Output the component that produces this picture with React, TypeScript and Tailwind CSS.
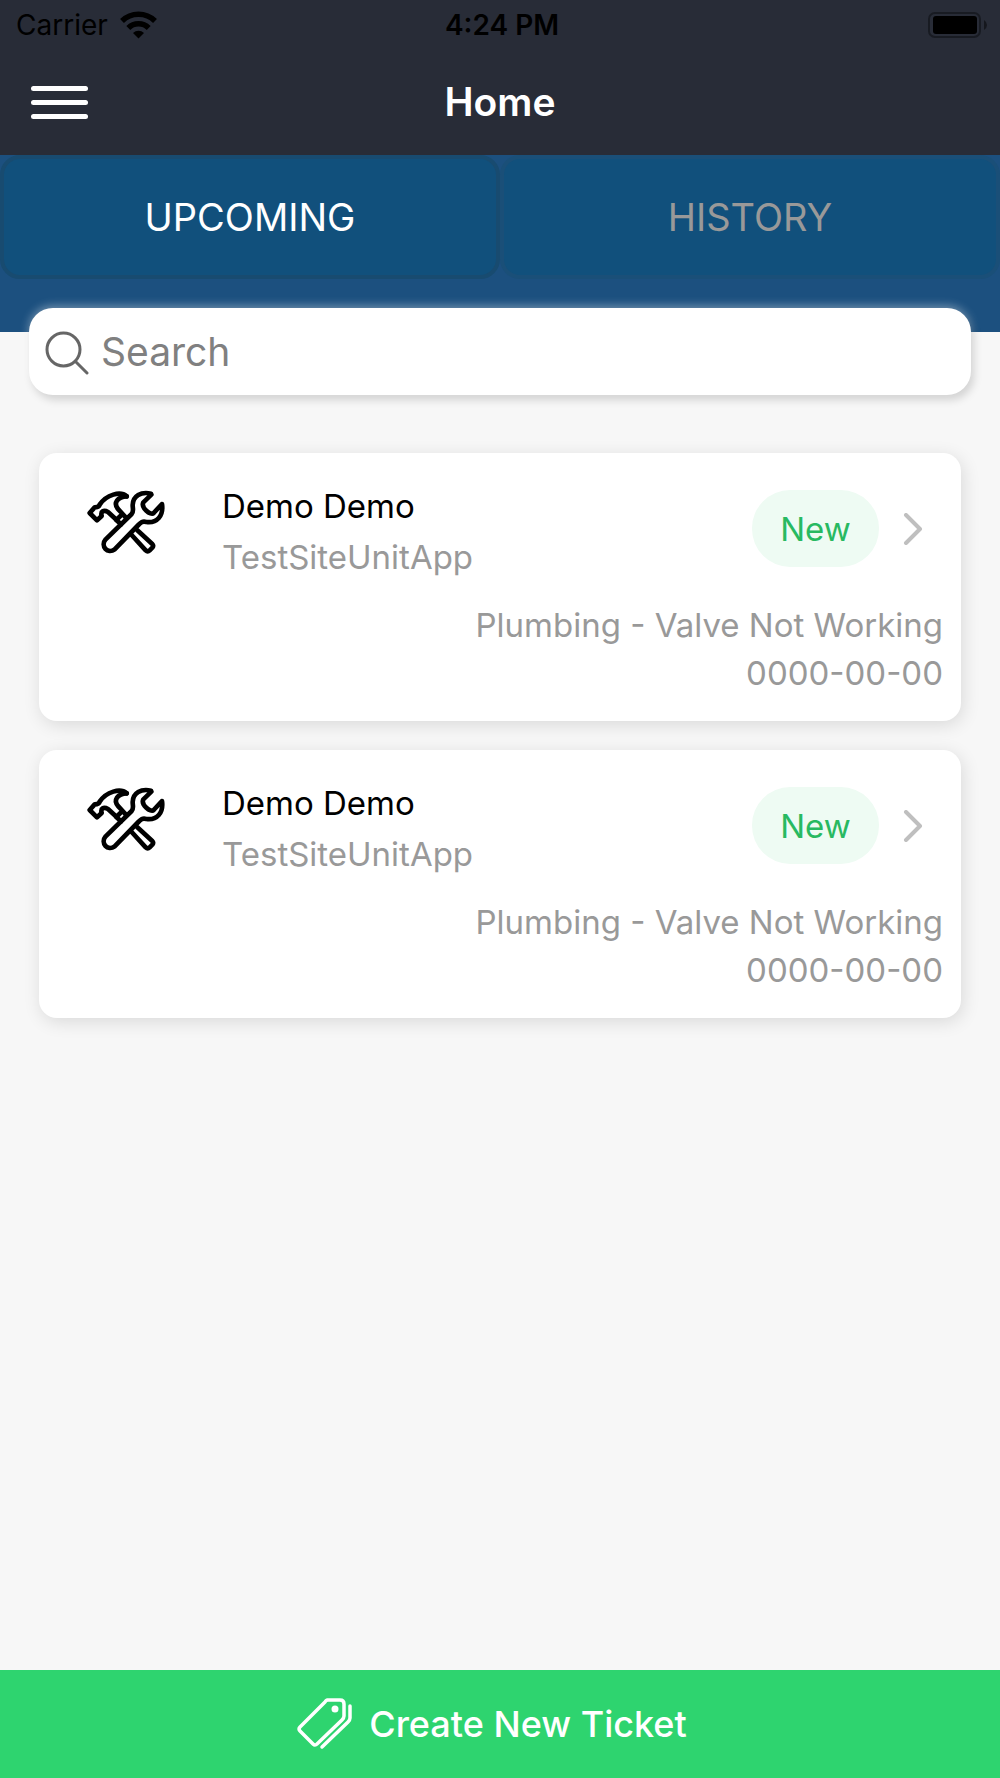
import React, { useState } from "react";

interface ticketType {
  id: number;
  name: string;
  site: string;
  status: string;
  issue: string;
  date: string;
}

const tickets: ticketType[] = [
  {
    id: 1,
    name: "Demo Demo",
    site: "TestSiteUnitApp",
    status: "New",
    issue: "Plumbing - Valve Not Working",
    date: "0000-00-00",
  },
  {
    id: 2,
    name: "Demo Demo",
    site: "TestSiteUnitApp",
    status: "New",
    issue: "Plumbing - Valve Not Working",
    date: "0000-00-00",
  },
];

const WifiIcon = () => (
  <svg className="h-7 w-[37px]" viewBox="0 0 37 28" aria-hidden="true">
    <g fill="none" stroke="#000" strokeWidth="5.500">
      <path d="M2 10A23.500 23.500 0 0 1 35 10" />
      <path d="M8.300 17A14.300 14.300 0 0 1 28.700 17" />
    </g>
    <path d="M18.500 27.500L13 22A8 8 0 0 1 24 22Z" />
  </svg>
);

const BatteryIcon = () => (
  <svg className="h-[26px] w-[60px]" viewBox="0 0 60 26" aria-hidden="true">
    <rect x="1" y="1" width="51" height="24" rx="6" fill="none" stroke="#181b22" strokeWidth="2" />
    <rect x="5" y="4" width="44" height="18" rx="3" />
    <path d="M56 8Q59 10 59 13T56 18Z" fill="#15171d" />
  </svg>
);

const SearchIcon = () => (
  <svg
    className="h-11 w-11 shrink-0"
    viewBox="0 0 44 44"
    fill="none"
    stroke="#666"
    strokeWidth="3"
    strokeLinecap="round"
    aria-hidden="true"
  >
    <circle cx="18.500" cy="18.500" r="16.500" />
    <path d="M30.500 30.500L42 42" />
  </svg>
);

const ToolsIcon = () => (
  <svg
    className="h-[65px] w-[78px]"
    viewBox="50 60 234 195"
    fill="none"
    stroke="#000"
    strokeWidth="14"
    strokeLinecap="round"
    strokeLinejoin="round"
    aria-hidden="true"
  >
    <path d="M169 79C150 62 108 74 88 104C86 112 78 112 73 112L58 129L80 151L94 138C90 124 100 119 113 126L139 150" />
    <path d="M169 79C142 80 127 99 144 118L157 132L166 142M152 136L138 150L152 163" />
    <path d="M184 195L226 241Q232 247 238 241L246 233Q251 227 245 221L201 181" />
    <path d="M242 71C212 64 188 78 187 105C187 118 191 124 184 132L106 208C89 228 112 254 133 238L204 165C212 157 216 153 228 156C260 160 280 138 275 102L250 129C241 138 211 113 219 97L243 74" />
  </svg>
);

const TagsIcon = () => (
  <svg
    className="h-[52px] w-14"
    viewBox="0 0 56 52"
    fill="none"
    stroke="#fff"
    strokeWidth="3.500"
    strokeLinecap="round"
    strokeLinejoin="round"
    aria-hidden="true"
  >
    <path d="M30 2H43Q47 2 47 6V18Q47 20 45 22L20 46Q18 48 16 46L3 33Q1 31 3 29L28 4Q29 2 31 2Z" />
    <path d="M53 8V20Q53 22 51 24L25 49" />
    <circle cx="38" cy="11" r="3.500" fill="#fff" stroke="none" />
  </svg>
);

const TicketCard = ({ ticket }: { ticket: ticketType }) => {
  return (
    <li className="flex h-[268px] flex-col rounded-[18px] bg-white pr-[18px] pt-[33px] text-[33px] leading-12 text-[#999] shadow-[2px_4px_18px_rgba(0,0,0,0.12)]">
      <div className="flex items-start">
        <div className="w-[183px] pl-12 pt-1">
          <ToolsIcon />
        </div>
        <div className="-mt-1 min-w-0 flex-1">
          <h2 className="text-black">{ticket.name}</h2>
          <p className="mt-[3px]">{ticket.site}</p>
        </div>
        <div className="mt-1 flex items-center">
          <span className="flex h-[77px] w-[127px] items-center justify-center rounded-[38px] bg-[#eefbf3] text-[#28b961]">
            {ticket.status}
          </span>
          <button type="button" aria-label="Open ticket" className="ml-6 mr-5 w-5">
            <svg
              className="h-8 w-5"
              viewBox="0 0 20 32"
              fill="none"
              stroke="#bfbfbf"
              strokeWidth="4"
              strokeLinecap="round"
              strokeLinejoin="round"
            >
              <path d="M3 2L17 16L3 30" />
            </svg>
          </button>
        </div>
      </div>
      <div className="mt-5 text-right">
        <p>{ticket.issue}</p>
        <p>{ticket.date}</p>
      </div>
    </li>
  );
};

const App = () => {
  const [tab, setTab] = useState("UPCOMING");

  return (
    <div className="flex min-h-screen flex-col bg-[#f7f7f7] font-['Inter',sans-serif]">
      <header className="bg-[#282c37]">
        <div className="grid h-[50px] grid-cols-3 items-center pl-4 pr-3 text-[28px] text-black">
          <div className="flex items-center gap-3">
            <span>Carrier</span>
            <WifiIcon />
          </div>
          <span className="text-center font-semibold">4:24 PM</span>
          <div className="flex justify-end">
            <BatteryIcon />
          </div>
        </div>
        <div className="grid h-[105px] grid-cols-3 items-center px-[31px]">
          <button type="button" aria-label="Menu" className="flex w-[57px] flex-col gap-[9px]">
            <span className="h-[5px] rounded-full bg-white"></span>
            <span className="h-[5px] rounded-full bg-white"></span>
            <span className="h-[5px] rounded-full bg-white"></span>
          </button>
          <h1 className="text-center text-[39px] font-semibold text-white">Home</h1>
        </div>
      </header>

      <div className="bg-[#1c507f] pb-[53px]">
        <div role="tablist" className="grid h-[124px] grid-cols-2">
          {["UPCOMING", "HISTORY"].map((name) => (
            <button
              key={name}
              type="button"
              role="tab"
              aria-selected={tab === name}
              onClick={() => setTab(name)}
              className={
                tab === name
                  ? "rounded-[20px] border-4 border-[#184b70] bg-[#11507c] text-[38px] text-white"
                  : "rounded-[20px] border-4 border-[#1a4f78] bg-[#11507c] text-[38px] text-[#999]"
              }
            >
              {name}
            </button>
          ))}
        </div>
      </div>

      <main className="flex-1">
        <label className="mx-[29px] -mt-6 flex h-[87px] items-center gap-3 rounded-[24px] bg-white px-4 pt-[2px] shadow-[3px_5px_8px_rgba(0,0,0,0.15),0_-2px_10px_rgba(255,255,255,0.4)]">
          <SearchIcon />
          <input
            type="text"
            placeholder="Search"
            aria-label="Search"
            className="min-w-0 flex-1 text-[39px] text-black outline-none placeholder:text-[#808080]"
          />
        </label>
        <ul className="mx-[39px] mt-[58px] flex flex-col gap-[29px]">
          {tickets.map((ticket) => (
            <TicketCard key={ticket.id} ticket={ticket} />
          ))}
        </ul>
      </main>

      <button
        type="button"
        className="flex h-[108px] w-full items-center justify-center gap-4 bg-[#2ed46f] pr-4 text-[36px] font-medium text-white"
      >
        <TagsIcon />
        Create New Ticket
      </button>
    </div>
  );
};

export default App;
